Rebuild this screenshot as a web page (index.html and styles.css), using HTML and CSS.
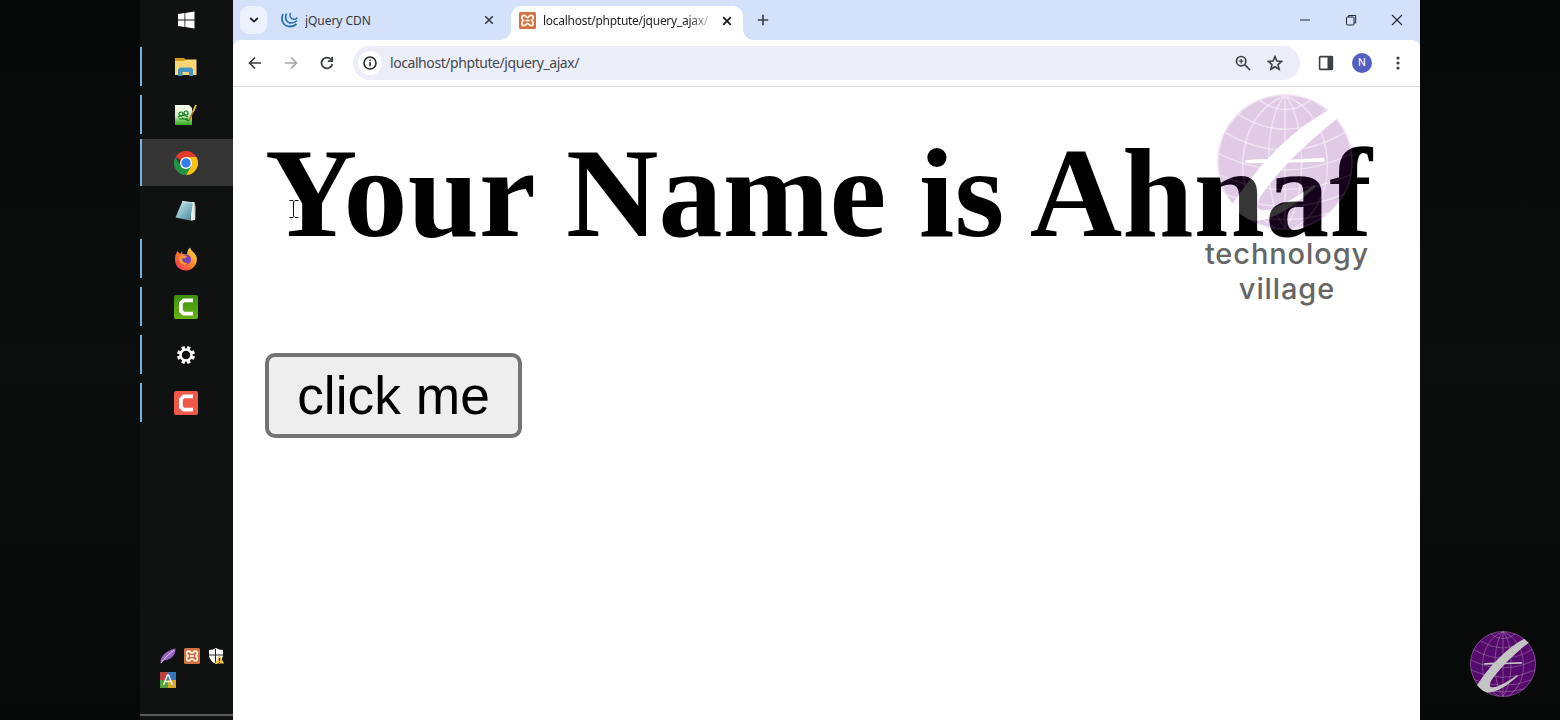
FILE: index.html
```html
<!DOCTYPE html>
<html lang="en">
<head>
<meta charset="utf-8">
<title>localhost/phptute/jquery_ajax/</title>
<link rel="stylesheet" href="styles.css">
</head>
<body>
<svg class="defs" width="0" height="0">
  <defs>
    <symbol id="globe" viewBox="0 0 406 406">
      <circle cx="203" cy="203" r="202" fill="#6f0a8c"/>
      <g fill="none" stroke="#e6c6ee" stroke-opacity=".6" stroke-width="4.5">
        <circle cx="203" cy="203" r="200"/>
        <path d="M203 2V404M203 5C145 60 130 310 203 400M203 5C261 60 276 310 203 400M203 5C50 60 30 320 175 400M203 5C356 60 376 320 231 400"/>
        <path d="M127 18Q203 75 279 18M62 60Q203 150 344 60M25 115Q203 220 381 115M4 178Q203 275 402 178M4 240Q203 330 402 240M28 300Q203 370 378 300M72 355Q203 395 334 355"/>
      </g>
      <path d="M333 48L361 72C262 150 178 235 130 306C108 348 132 354 170 340C214 323 252 298 291 271L295 277C240 326 178 374 116 379C88 379 62 353 43 333C118 219 215 113 333 48Z" fill="#fff"/>
      <path d="M86 198Q145 191 214 196L318 190Q326 197 318 202L200 205L88 207Q82 203 86 198Z" fill="#fff"/>
    </symbol>
    <symbol id="xampp" viewBox="0 0 16 16">
      <rect width="16" height="16" rx="1.5" fill="#d47140"/>
      <path d="M4.6 3.2C7 3.2 6.2 5 8 5S9 3.2 11.4 3.2C14 3.2 13.7 6.6 12 8C13.7 9.4 14 12.8 11.4 12.8C9 12.8 9.8 11 8 11S7 12.8 4.6 12.8C2 12.8 2.3 9.4 4 8C2.3 6.6 2 3.2 4.6 3.2Z" fill="none" stroke="#fff3e9" stroke-width="1.7"/>
      <path d="M6 8H10" stroke="#fff3e9" stroke-width="1.7"/>
    </symbol>
    <symbol id="camtasia" viewBox="0 0 24 24">
      <path d="M19 3.5H9L5 7.5V17L9 20.5H19V16.8H10.5L8.8 15.2V9L10.5 7.2H19Z" fill="#fff"/>
    </symbol>
    <linearGradient id="note" x2="1" y2="1"><stop stop-color="#d8f1f5"/><stop offset="1" stop-color="#3c8799"/></linearGradient>
    <linearGradient id="flame" x1="1" x2="0" y2="1"><stop stop-color="#fff04a"/><stop offset=".45" stop-color="#ff8a22"/><stop offset="1" stop-color="#f32460"/></linearGradient>
    <linearGradient id="grass" x2="0" y2="1"><stop stop-color="#f6fbf1"/><stop offset=".5" stop-color="#d6efc6"/><stop offset="1" stop-color="#31aa1a"/></linearGradient>
    <linearGradient id="green" x2="0" y2="1"><stop stop-color="#3d8f0d"/><stop offset="1" stop-color="#65b415"/></linearGradient>
  </defs>
</svg>
<div class="screen">
  <div class="gutter"></div>

  <aside class="taskbar">
    <div class="task start"><svg width="18" height="18" viewBox="0 0 18 18"><path fill="#fff" d="M1 3L7.5 2V8.5H1ZM8.3 1.9L17.5.6V8.5H8.3ZM1 9.4H7.5V16L1 15ZM8.3 9.4H17.5V17.4L8.3 16.1Z"/></svg></div>
    <div class="task open"><svg width="24" height="24" viewBox="0 0 24 24"><path fill="#d99a1c" d="M1 3H10L12 5V8H1Z"/><path fill="#fbd775" d="M1 6H10L12 4.5H22.5V20H1Z"/><path fill="#4795bf" d="M4 21V14.5L6 12.5H17.5L19 14.5V21H15V17H8.5V21Z"/></svg></div>
    <div class="task open"><svg width="24" height="24" viewBox="0 0 24 24"><path fill="url(#grass)" d="M1 2H15L18 5V22H1Z"/><g fill="none" stroke="#167a1b" stroke-width="1.2"><circle cx="7" cy="11" r="2"/><circle cx="12" cy="10" r="2"/><path d="M4 14Q9 11 14 14M8 15L15 18M5 16L9 16M12 15L14 17"/></g><path d="M22 2L15 18" stroke="#a97123" stroke-width="1.7"/><path d="M22 2L19 9" stroke="#e9bc4a" stroke-width="1.7"/></svg></div>
    <div class="task open active"><svg width="24" height="24" viewBox="0 0 24 24"><path fill="#e33b2e" d="M12 12L1.6 6A12 12 0 0 1 22.4 6Z"/><path fill="#fbc116" d="M12 6H22.4A12 12 0 0 1 12 24L17.2 15Z"/><path fill="#229342" d="M1.6 6L6.8 15L12 18L17.2 15L12 24A12 12 0 0 1 1.6 6Z"/><circle cx="12" cy="12" r="6" fill="#fff"/><circle cx="12" cy="12" r="4.7" fill="#347de8"/></svg></div>
    <div class="task"><svg width="24" height="24" viewBox="0 0 24 24"><path fill="#8c6f55" d="M20 3L22 8L21.5 20L17 22Z"/><path fill="#e7f0f1" d="M17 3H20.5L21 21L16.5 21.5Z"/><path fill="url(#note)" d="M8.5 2L19 3.5L16 21.5L1.5 18.5Z"/><path d="M8.5 2.6L19 4" stroke="#e7f5f8" stroke-width="1.5" stroke-dasharray="1 1"/></svg></div>
    <div class="task open"><svg width="24" height="24" viewBox="0 0 24 24"><path fill="url(#flame)" d="M1.5 8L3.5 4L6 7L8 4.5L8.5 7L13 7.5C13 4 14.5 2 16 .5C17 4 20 5 22 8.5C25 15 20 23.5 12 23.5C3 23.5-.5 16 1.5 8Z"/><circle cx="12" cy="12.5" r="5" fill="#7440bd"/><path fill="#ff9b27" d="M5 10Q8 7 13 9L11 11.5L8.5 11Q7 15 12 16L14 15Q12 19 8 17Q4 14 5 10Z"/></svg></div>
    <div class="task open"><svg width="24" height="24" viewBox="0 0 24 24"><rect width="24" height="24" rx="2" fill="url(#green)"/><use href="#camtasia" width="24" height="24"/></svg></div>
    <div class="task open"><svg width="20" height="20" viewBox="0 0 20 20"><g stroke="#fff" stroke-width="3.4"><path d="M6.8 1.6L13.2 18.4M13.2 1.6L6.8 18.4M1.6 6.8L18.4 13.2M1.6 13.2L18.4 6.8"/></g><circle cx="10" cy="10" r="6.6" fill="#fff"/><circle cx="10" cy="10" r="4.2" fill="#111"/></svg></div>
    <div class="task open"><svg width="24" height="24" viewBox="0 0 24 24"><rect width="24" height="24" rx="2" fill="#f0594a"/><use href="#camtasia" width="24" height="24"/></svg></div>

    <div class="tray">
      <svg width="16" height="16" viewBox="0 0 16 16"><path fill="#9b63c4" d="M15.5.5C16 7 11 12 3.5 12.5L1 15.8L.5 15C0 8 7 2 15.5.5Z"/><path d="M1 15Q6 8 14 2" stroke="#e5c9f1" fill="none"/></svg>
      <svg width="16" height="16"><use href="#xampp" width="16" height="16"/></svg>
      <svg width="16" height="16" viewBox="0 0 16 16"><path fill="#fff" d="M8 0Q11 2 15 2V8Q14 13 8 16Q2 13 1 8V2Q5 2 8 0Z"/><path d="M7.5 1V15M1 7H15" stroke="#222"/><path fill="#f8c935" d="M11.5 7L16 15.5H7Z"/><path d="M11.5 10V13M11.5 13.7V14.8" stroke="#222" stroke-width="1.2"/></svg>
      <svg width="16" height="16" viewBox="0 0 16 16"><path fill="#bc403b" d="M0 0H8V8H0Z"/><path fill="#3277b8" d="M8 0H16V8H8Z"/><path fill="#4ea13d" d="M0 8H8V16H0Z"/><path fill="#d8a52b" d="M8 8H16V16H8Z"/><path d="M3.5 13L7.5 3H8.5L12.5 13M5 9.5H11" stroke="#e4ece4" stroke-width="1.6" fill="none"/></svg>
    </div>
    <div class="taskbar-end"></div>
  </aside>

  <main class="browser">
    <header class="tabstrip">
      <div class="tab-search"><svg width="10" height="6" viewBox="0 0 10 6"><path d="M1.2 1L5 4.6L8.8 1" fill="none" stroke="#1c1f24" stroke-width="1.8"/></svg></div>
      <div class="tab">
        <svg width="17" height="16" viewBox="0 0 17 16" fill="none" stroke="#2671a9"><path stroke-width="1.8" d="M2 2C-1 9 3 14.5 9 14.5Q13 14.5 15.5 12"/><path stroke-width="1.6" d="M5.5 1.5C3 7 6 11 10.5 11Q13.5 11 16 8.5"/><path stroke-width="1.4" d="M9.5 1C8 4.5 10 7.3 13 7.3Q15 7.3 16.5 5.5"/></svg>
        <span class="tab-title">jQuery CDN</span>
        <svg class="close" width="10" height="10" viewBox="0 0 10 10"><path d="M1.2 1.2L8.8 8.8M8.8 1.2L1.2 8.8" stroke="#30343b" stroke-width="1.5"/></svg>
      </div>
      <div class="tab selected">
        <svg width="17" height="17"><use href="#xampp" width="17" height="17"/></svg>
        <span class="tab-title">localhost/phptute/jquery_ajax/</span>
        <svg class="close" width="10" height="10" viewBox="0 0 10 10"><path d="M1.2 1.2L8.8 8.8M8.8 1.2L1.2 8.8" stroke="#17191c" stroke-width="1.7"/></svg>
      </div>
      <svg class="new-tab" width="12" height="12" viewBox="0 0 12 12"><path d="M6 .8V11.2M.8 6H11.2" stroke="#3b414b" stroke-width="1.7"/></svg>
      <div class="window-controls">
        <svg width="12" height="12" viewBox="0 0 12 12"><path d="M1 6H11" stroke="#222831"/></svg>
        <svg width="12" height="12" viewBox="0 0 12 12" fill="none" stroke="#222831"><rect x="1.5" y="3" width="7.5" height="8" rx="1"/><path d="M3.5 3V1.5H10.7V9H9"/></svg>
        <svg width="12" height="12" viewBox="0 0 12 12"><path d="M1 1L11 11M11 1L1 11" stroke="#222831" stroke-width="1.1"/></svg>
      </div>
    </header>

    <div class="toolbar">
      <svg width="14" height="14" viewBox="0 0 14 14" fill="none" stroke="#3c4043" stroke-width="1.7"><path d="M13 7H1.8M7 1.5L1.5 7L7 12.5"/></svg>
      <svg width="14" height="14" viewBox="0 0 14 14" fill="none" stroke="#a4a6a8" stroke-width="1.6"><path d="M1 7H12.2M7 1.5L12.5 7L7 12.5"/></svg>
      <svg width="14" height="14" viewBox="0 0 14 14"><path d="M12.2 8A5.4 5.4 0 1 1 10.8 3.2L12.8 5.3" fill="none" stroke="#3c4043" stroke-width="1.8"/><path d="M13 .8V6H7.8V4.3H11.3V.8Z" fill="#3c4043"/></svg>
      <div class="address">
        <span class="info"><svg width="14" height="14" viewBox="0 0 14 14"><circle cx="7" cy="7" r="6" fill="none" stroke="#26282b" stroke-width="1.6"/><path d="M7 6V10.3M7 3.5V5" stroke="#26282b" stroke-width="1.6"/></svg></span>
        <span class="url">localhost/phptute/jquery_ajax/</span>
        <svg width="16" height="16" viewBox="0 0 16 16" fill="none" stroke="#3c4043" stroke-width="1.7"><circle cx="6.2" cy="6.2" r="4.7"/><path d="M9.7 9.7L15 15"/><path d="M6.2 4V8.4M4 6.2H8.4" stroke-width="1.3"/></svg>
        <svg width="16" height="16" viewBox="0 0 16 16"><path d="M8 1.6L9.9 6L14.7 6.4L11 9.6L12.1 14.3L8 11.8L3.9 14.3L5 9.6L1.3 6.4L6.1 6Z" fill="none" stroke="#3c4043" stroke-width="1.6"/></svg>
      </div>
      <svg class="panel" width="16" height="16" viewBox="0 0 16 16"><rect x="1.6" y="1.6" width="12.8" height="12.8" rx="1" fill="none" stroke="#3c4043" stroke-width="1.6"/><path d="M9.5 1H15V15H9.5Z" fill="#3c4043"/></svg>
      <span class="avatar">N</span>
      <svg class="menu" width="4" height="16" viewBox="0 0 4 16" fill="#3c4043"><circle cx="2" cy="3" r="1.6"/><circle cx="2" cy="8" r="1.6"/><circle cx="2" cy="13" r="1.6"/></svg>
    </div>

    <section class="page">
      <h1>Your Name is Ahnaf</h1>
      <button type="button">click me</button>
      <svg class="cursor" width="10" height="18" viewBox="0 0 10 18"><path d="M.5 .5H4L5 1.5L6 .5H9.5M4.5 1.5V16.5M.5 17.5H4L5 16.5L6 17.5H9.5" fill="none" stroke="#111"/></svg>
      <div class="watermark">
        <svg width="136" height="136"><use href="#globe" width="136" height="136"/></svg>
        <p><span>technology</span><br>village</p>
      </div>
    </section>
  </main>

  <div class="gutter brand"><svg width="66" height="66"><use href="#globe" width="66" height="66"/></svg></div>
</div>
</body>
</html>
```

FILE: styles.css
```css
* { box-sizing: border-box; }
body { margin: 0; background: #080b0a; font-family: "Noto Sans", "Open Sans", sans-serif; overflow: hidden; }
.defs { display: block; position: absolute; }
.screen { display: grid; grid-template-columns: 140px 93px 1187px 140px; height: 720px; }
.gutter { background: linear-gradient(#050807, #0b0e0d 50%, #060908); }
.brand { display: flex; align-items: flex-end; justify-content: center; padding: 0 0 23px 26px; }
.brand svg { opacity: .76; }

.taskbar { background: #101111; display: flex; flex-direction: column; }
.task { height: 48px; display: flex; align-items: center; justify-content: center; position: relative; padding: 0 1px 1px 0; }
.task.start { height: 43px; padding-bottom: 3px; }
.open::before { content: ""; position: absolute; left: 0; top: 4px; width: 2px; height: 39px; background: #76b0de; }
.active { background: linear-gradient(#353535 47px, transparent 47px); }
.active::before { top: 0; height: 47px; }
.tray { margin: auto 0 26px; padding-left: 20px; display: grid; grid-template-columns: repeat(3, 16px); gap: 8px; }
.taskbar-end { height: 6px; border-top: 2px solid #5c5c5c; }

.browser { display: grid; grid-template-rows: 40px 47px 1fr; background: #d3e1fb; min-width: 0; }
.tabstrip { display: flex; align-items: center; padding-left: 7px; }
.tab-search { width: 27px; height: 28px; border-radius: 9px; background: #edf3fe; display: grid; place-items: center; }
.tab { display: flex; align-items: center; width: 233px; margin-left: 11px; padding: 0 17px 0 3px; font-size: 12px; color: #34383e; }
.tab svg { flex: none; }
.tab-title { flex: 1; margin-left: 7px; overflow: hidden; white-space: nowrap; letter-spacing: -.05px; }
.tab .close { margin-left: 12px; }
.selected { position: relative; align-self: flex-end; width: 232px; height: 34px; padding: 0 11px 5px 8px; background: #fff; border-radius: 10px 10px 0 0; color: #1d1f22; margin-left: 0; }
.selected .close { margin-left: 10px; }
.selected::before, .selected::after { content: ""; position: absolute; bottom: 0; width: 10px; height: 10px; }
.selected::before { left: -10px; background: radial-gradient(circle at 0 0, transparent 9.5px, #fff 10px); }
.selected::after { right: -10px; background: radial-gradient(circle at 100% 0, transparent 9.5px, #fff 10px); }
.selected .tab-title { letter-spacing: -.27px; mask-image: linear-gradient(90deg, #000 86%, rgba(0, 0, 0, .15)); }
.new-tab { margin-left: 14px; }
.window-controls { display: flex; gap: 34px; margin-left: auto; padding-right: 17px; }

.toolbar { display: flex; align-items: center; padding: 0 0 1px 15px; background: #fff; border-bottom: 1px solid #dcdcdf; border-radius: 8px 8px 0 0; }
.toolbar > svg + svg { margin-left: 22px; }
.address { display: flex; align-items: center; width: 947px; height: 34px; margin-left: 19px; padding: 0 17px 0 5px; border-radius: 17px; background: #ebedf8; }
.info { display: grid; place-items: center; width: 24px; height: 24px; border-radius: 50%; background: #fff; }
.url { flex: 1; margin-left: 8px; font-size: 14px; letter-spacing: -.43px; color: #45484d; }
.address > svg + svg { margin-left: 16px; }
.panel { margin-left: 18px; }
.avatar { display: grid; place-items: center; width: 20px; height: 20px; margin-left: 18px; border-radius: 50%; background: #535fc0; color: #fff; font: 11px Roboto, sans-serif; }
.menu { margin-left: 24px; }

.page { position: relative; padding: 0 32px; background: #fff; }
h1 { margin: 0; padding-top: 33px; font: bold 128px/147px "Liberation Serif", serif; letter-spacing: .2px; color: #000; white-space: nowrap; }
button { display: block; width: 257px; height: 85px; margin: 86px 0 0; padding: 0; border: 4px solid #747474; border-radius: 10px; background: #eee; color: #000; font: 53.33px "Liberation Sans", sans-serif; }
.cursor { position: absolute; left: 56px; top: 113px; }
.watermark { position: absolute; left: 960px; top: 7px; width: 188px; display: flex; flex-direction: column; align-items: center; }
.watermark svg { opacity: .21; margin-right: 4px; }
.watermark p { margin: 6px 0 0; text-align: center; font: 500 29px/35px Inter, sans-serif; letter-spacing: .9px; color: #666; }
```
